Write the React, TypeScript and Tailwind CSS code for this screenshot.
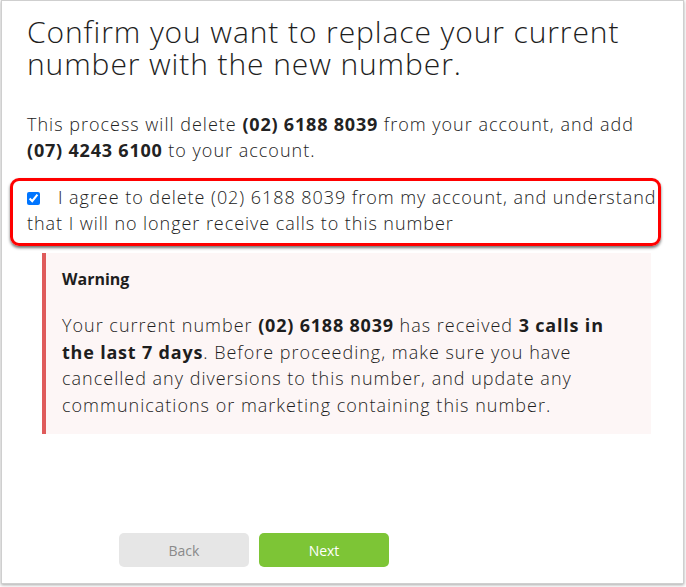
import React from "react";

const font = { fontFamily: '"Open Sans", "Liberation Sans", sans-serif' };

export default function App() {
  return (
    <div className="min-h-screen bg-white" style={font}>
      <div className="ml-[1px] flex h-[584px] w-[683px] flex-col border border-[#cfcfcf] shadow-[0_1px_3px_rgba(0,0,0,0.35)]">
        <div className="pl-[25px] pr-[22px]">
          <h1 className="pt-[15px] text-[30px] font-light leading-[32px] tracking-[0.9px] text-[#1e1e1e]">
            Confirm you want to replace your current number with the new number.
          </h1>

          <p className="mt-[31px] text-[18px] font-light leading-[26px] tracking-[1px] text-[#222]">
            This process will delete <b className="font-bold tracking-[0.8px]">(02) 6188 8039</b> from your account,
            and add <b className="font-bold tracking-[0.8px]">(07) 4243 6100</b> to your account.
          </p>

          {/* agree checkbox, outlined in red */}
          <label className="-ml-[17px] mt-[15px] block rounded-[9px] border-[3px] border-[#ff0000] pb-[7px] pl-[14px] pr-[1px] pt-[3px] text-[18px] font-light leading-[26px] tracking-[0.95px] text-[#222] shadow-[0_2px_3px_rgba(0,0,0,0.55)]">
            <input
              type="checkbox"
              checked
              readOnly
              className="mr-[18px] inline-block h-[13px] w-[13px] align-[-1px]"
            />
            I agree to delete (02) 6188 8039 from my account, and understand that I will no longer receive calls to
            this number
          </label>

          <div className="ml-[15px] mr-[10px] mt-[7px] border-l-4 border-[#df5b5b] bg-[#fdf6f6] pb-[16px] pl-[16px] pr-[16px] pt-[14px] text-[#1e1e1e]">
            <div className="text-[16px] font-bold leading-[24px]">Warning</div>
            <p className="mt-[21px] text-[18px] font-light leading-[26.6px] tracking-[1px]">
              Your current number <b className="font-bold tracking-[0.8px]">(02) 6188 8039</b> has received{" "}
              <b className="font-bold tracking-[0.8px]">3 calls in the last 7 days</b>. Before proceeding, make sure
              you have cancelled any diversions to this number, and update any communications or marketing
              containing this number.
            </p>
          </div>
        </div>

        <div className="mt-auto flex gap-[10px] pb-[16px] pl-[117px]">
          <button className="h-[34px] w-[130px] rounded-[5px] bg-[#e6e6e6] text-[14px] text-[#8a8a8a]">Back</button>
          <button className="h-[34px] w-[130px] rounded-[5px] bg-[#7dc536] text-[14px] text-white">Next</button>
        </div>
      </div>
    </div>
  );
}
